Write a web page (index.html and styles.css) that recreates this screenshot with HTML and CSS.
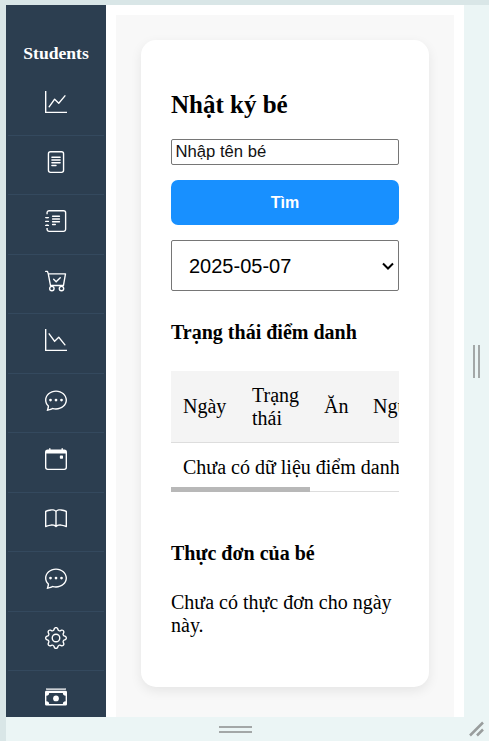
FILE: index.html
```html
<!DOCTYPE html>
<html lang="vi">
<head>
<meta charset="utf-8">
<title>Nhật ký bé</title>
<link rel="stylesheet" href="styles.css">
</head>
<body>
<svg class="sprite" aria-hidden="true">
<symbol id="chat" viewBox="0 0 16 16"><path d="M5 8a1 1 0 1 1-2 0 1 1 0 0 1 2 0m4 0a1 1 0 1 1-2 0 1 1 0 0 1 2 0m3 1a1 1 0 1 0 0-2 1 1 0 0 0 0 2"/><path d="m2.165 15.803.02-.004c1.83-.363 2.948-.842 3.468-1.105A9 9 0 0 0 8 15c4.418 0 8-3.134 8-7s-3.582-7-8-7-8 3.134-8 7c0 1.76.743 3.37 1.97 4.6a10.4 10.4 0 0 1-.524 2.318l-.003.011a11 11 0 0 1-.244.637c-.079.186.074.394.273.362a22 22 0 0 0 .693-.125m.8-3.108a1 1 0 0 0-.287-.801C1.618 10.83 1 9.468 1 8c0-3.192 3.004-6 7-6s7 2.808 7 6-3.004 6-7 6a8 8 0 0 1-2.088-.272 1 1 0 0 0-.711.074c-.387.196-1.24.57-2.634.893a11 11 0 0 0 .398-2"/></symbol>
</svg>
<div class="workspace">
  <div class="device">
    <nav class="sidebar">
      <div class="brand">Students</div>
      <a class="item"><svg viewBox="0 0 16 16"><path d="M0 0h1v15h15v1H0zm14.817 3.113a.5.5 0 0 1 .07.704l-4.5 5.5a.5.5 0 0 1-.74.037L7.06 6.767l-3.656 5.027a.5.5 0 0 1-.808-.588l4-5.5a.5.5 0 0 1 .758-.06l2.609 2.61 4.15-5.073a.5.5 0 0 1 .704-.07"/></svg></a>
      <a class="item"><svg viewBox="0 0 16 16"><g class="line"><rect x="2.5" y=".5" width="11" height="15" rx="1.5"/><path stroke-linecap="round" d="M5 4.5h6M5 6.5h6M5 8.5h6M5 10.5h3"/></g></svg></a>
      <a class="item"><svg viewBox="0 0 16 16"><g class="line"><path d="M1.5 3V2A1.5 1.5 0 0 1 3 .5h10.5A1.5 1.5 0 0 1 15 2v12a1.5 1.5 0 0 1-1.5 1.5H3A1.5 1.5 0 0 1 1.5 14v-1M1.5 5v1M1.5 8v.5M1.5 10.5v1"/><path stroke-linecap="round" d="M.5 5.5h2M.5 8.3h2M.5 11.2h2M5.5 4.5h5M5.5 6.5h5M5.5 8.5h5M5.5 10.5h2"/></g></svg></a>
      <a class="item"><svg viewBox="0 0 16 16"><g class="line"><path d="M.5 1h1.3l.6 1.8L4 11.300h9.400M2.400 2.800h12.500l-1.500 8.500" stroke-linejoin="round" stroke-linecap="round"/><path d="m6.300 6.800 1.800 1.800 3-3" stroke-linecap="round"/><circle cx="5" cy="13.500" r="1.600"/><circle cx="12" cy="13.500" r="1.600"/></g></svg></a>
      <a class="item"><svg viewBox="0 0 16 16"><path d="M0 0h1v15h15v1H0zm14.817 11.887a.5.5 0 0 0 .07-.704l-4.5-5.5a.5.5 0 0 0-.74-.037L7.06 8.233 3.404 3.206a.5.5 0 0 0-.808.588l4 5.5a.5.5 0 0 0 .758.06l2.609-2.61 4.15 5.073a.5.5 0 0 0 .704.07"/></svg></a>
      <a class="item"><svg><use href="#chat"/></svg></a>
      <a class="item"><svg viewBox="0 0 16 16"><path fill-rule="evenodd" d="M4 .5a.5.5 0 0 0-1 0V1H2a2 2 0 0 0-2 2v11a2 2 0 0 0 2 2h12a2 2 0 0 0 2-2V3a2 2 0 0 0-2-2h-1V.5a.5.5 0 0 0-1 0V1H4zM1 4h14v10a1 1 0 0 1-1 1H2a1 1 0 0 1-1-1zM11.300 5.500h1.300a.5.5 0 0 1 .5.5v1.300a.5.5 0 0 1-.5.5h-1.300a.5.5 0 0 1-.5-.5V6a.5.5 0 0 1 .5-.5"/></svg></a>
      <a class="item"><svg viewBox="0 0 16 16"><path d="M1 2.828c.885-.37 2.154-.769 3.388-.893 1.33-.134 2.458.063 3.112.752v9.746c-.935-.53-2.12-.603-3.213-.493-1.18.12-2.37.461-3.287.811zm7.5-.141c.654-.689 1.782-.886 3.112-.752 1.234.124 2.503.523 3.388.893v9.923c-.918-.35-2.107-.692-3.287-.81-1.094-.111-2.278-.039-3.213.492zM8 1.783C7.015.936 5.587.81 4.287.94c-1.514.153-3.042.672-3.994 1.105A.5.5 0 0 0 0 2.5v11a.5.5 0 0 0 .707.455c.882-.4 2.303-.881 3.68-1.02 1.409-.142 2.59.087 3.223.877a.5.5 0 0 0 .78 0c.633-.79 1.814-1.019 3.222-.877 1.378.139 2.8.62 3.681 1.02A.5.5 0 0 0 16 13.5v-11a.5.5 0 0 0-.293-.455c-.952-.433-2.48-.952-3.994-1.105C10.413.809 8.985.936 8 1.783"/></svg></a>
      <a class="item"><svg><use href="#chat"/></svg></a>
      <a class="item"><svg viewBox="0 0 16 16"><path d="M8 4.754a3.246 3.246 0 1 0 0 6.492 3.246 3.246 0 0 0 0-6.492M5.754 8a2.246 2.246 0 1 1 4.492 0 2.246 2.246 0 0 1-4.492 0"/><path d="M9.796 1.343c-.527-1.79-3.065-1.79-3.592 0l-.094.319a.873.873 0 0 1-1.255.52l-.292-.16c-1.64-.892-3.433.902-2.54 2.541l.159.292a.873.873 0 0 1-.52 1.255l-.319.094c-1.79.527-1.79 3.065 0 3.592l.319.094a.873.873 0 0 1 .52 1.255l-.16.292c-.892 1.64.901 3.434 2.541 2.54l.292-.159a.873.873 0 0 1 1.255.52l.094.319c.527 1.79 3.065 1.79 3.592 0l.094-.319a.873.873 0 0 1 1.255-.52l.292.16c1.64.893 3.434-.902 2.54-2.541l-.159-.292a.873.873 0 0 1 .52-1.255l.319-.094c1.79-.527 1.79-3.065 0-3.592l-.319-.094a.873.873 0 0 1-.52-1.255l.16-.292c.893-1.64-.902-3.433-2.541-2.54l-.292.159a.873.873 0 0 1-1.255-.52zm-2.633.283c.246-.835 1.428-.835 1.674 0l.094.319a1.873 1.873 0 0 0 2.693 1.115l.291-.16c.764-.415 1.6.42 1.184 1.185l-.159.292a1.873 1.873 0 0 0 1.116 2.692l.318.094c.835.246.835 1.428 0 1.674l-.319.094a1.873 1.873 0 0 0-1.115 2.693l.16.291c.415.764-.42 1.6-1.185 1.184l-.291-.159a1.873 1.873 0 0 0-2.693 1.116l-.094.318c-.246.835-1.428.835-1.674 0l-.094-.319a1.873 1.873 0 0 0-2.692-1.115l-.292.16c-.764.415-1.6-.42-1.184-1.185l.159-.291A1.873 1.873 0 0 0 1.945 8.93l-.319-.094c-.835-.246-.835-1.428 0-1.674l.319-.094A1.873 1.873 0 0 0 3.06 4.377l-.16-.292c-.415-.764.42-1.6 1.185-1.184l.292.159a1.873 1.873 0 0 0 2.692-1.115z"/></svg></a>
      <a class="item"><svg viewBox="0 0 16 16"><path fill-rule="evenodd" d="M1.5 1.800h13a.5.5 0 0 1 .5 1H1a.5.5 0 0 1 .5-1M1 3.500h14a1 1 0 0 1 1 1v8.700a1 1 0 0 1-1 1H1a1 1 0 0 1-1-1V4.500a1 1 0 0 1 1-1M3 5a2 2 0 0 1-2 2v4a2 2 0 0 1 2 2h10a2 2 0 0 1 2-2V7a2 2 0 0 1-2-2z"/><circle cx="8" cy="9" r="2.100"/></svg></a>
    </nav>
    <main class="page">
      <section class="card">
        <h2>Nhật ký bé</h2>
        <input class="search" type="text" placeholder="Nhập tên bé">
        <button class="find">Tìm</button>
        <div class="picker">
          <select class="date"><option>2025-05-07</option></select>
          <svg class="arrow" viewBox="0 0 12 8"><path d="m1 1.500 5 5 5-5"/></svg>
        </div>
        <h4>Trạng thái điểm danh</h4>
        <div class="scroller">
          <table>
            <colgroup><col class="c1"><col class="c2"><col class="c3"><col></colgroup>
            <tr><th>Ngày</th><th>Trạng thái</th><th>Ăn</th><th>Ngủ</th></tr>
            <tr><td colspan="4">Chưa có dữ liệu điểm danh</td></tr>
          </table>
          <div class="thumb"></div>
        </div>
        <h4 class="menu">Thực đơn của bé</h4>
        <p>Chưa có thực đơn cho ngày này.</p>
      </section>
    </main>
  </div>
  <div class="handle right"></div>
  <div class="handle bottom"></div>
  <svg class="corner" viewBox="0 0 16 16"><path d="M1 14.500 14 1.500M8 14.500l6-6"/></svg>
</div>
</body>
</html>
```
FILE: styles.css
```css
* { box-sizing: border-box; }
body {
  margin: 0;
  height: 741px;
  overflow: hidden;
  padding: 5px 0 0 6px;
  background: #d9e6e7;
  color: #000;
  font-family: "Liberation Serif", serif;
  font-size: 20px;
  line-height: 23px;
}
.sprite { position: absolute; width: 0; height: 0; }
.workspace {
  display: grid;
  grid-template: 712px 24px / 458px 25px;
  background: #ebf5f5;
}
.device { display: flex; overflow: hidden; background: #fff; }
.sidebar {
  flex: 0 0 100px;
  padding: 37px 2px 0;
  background: #2c3e50;
}
.brand {
  height: 34px;
  line-height: 23px;
  color: #fff;
  font-size: 17.6px;
  font-weight: bold;
  text-align: center;
}
.item {
  display: flex;
  justify-content: center;
  height: 59.5px;
  padding-top: 15px;
  border-bottom: 1px solid #34495e;
}
.item svg { width: 22px; height: 22px; fill: #fff; }
.item .line { fill: none; stroke: #fff; stroke-width: 1; }
.page {
  flex: 1;
  min-width: 0;
  margin: 10px 10px 0;
  padding: 25px;
  background: #f8f8f8;
}
.card {
  height: 647px;
  padding: 50px 30px 0;
  border-radius: 15px;
  background: #fff;
  box-shadow: 0 4px 12px rgba(0, 0, 0, .08);
}
h2 { margin: 0 0 19px; font-size: 25px; line-height: 30px; }
.search, .find, .date { display: block; width: 100%; font-family: "Liberation Sans", sans-serif; }
.search {
  height: 26px;
  margin: 0 0 15px;
  padding: 1px 3.5px;
  border: 1px solid #767676;
  border-radius: 2px;
  font-size: 16.67px;
}
.search::placeholder { color: #111; }
.find {
  height: 45px;
  margin: 0 0 15px;
  padding: 0;
  border: 0;
  border-radius: 7px;
  background: #1890ff;
  color: #fff;
  font-size: 16px;
  font-weight: bold;
}
.picker { position: relative; }
.date {
  appearance: none;
  height: 51px;
  padding: 0 0 0 17px;
  border: 1px solid #767676;
  border-radius: 2px;
  background: #fff;
  color: #000;
  font-size: 20px;
}
.arrow {
  position: absolute;
  top: 22px;
  right: 5px;
  width: 12px;
  height: 8px;
  fill: none;
  stroke: #000;
  stroke-width: 2;
  pointer-events: none;
}
h4 { margin: 30px 0 27px; font-size: 20px; line-height: 23px; }
.scroller { position: relative; height: 121px; overflow: hidden; }
table { width: 374px; border-spacing: 0; table-layout: fixed; }
.c1 { width: 69px; }
.c2 { width: 72px; }
.c3 { width: 49px; }
th, td {
  padding: 12px;
  border-bottom: 1px solid #ddd;
  font-weight: normal;
  text-align: left;
}
th { height: 72px; background: #f4f4f4; }
td { height: 49px; }
.thumb {
  position: absolute;
  left: 0;
  bottom: 0;
  width: 139px;
  height: 5px;
  background: #b8b8b8;
}
.menu { margin: 50px 0 26px; }
p { margin: 0; }
.handle { place-self: center; border: solid #a3a7a7; }
.right { width: 7px; height: 33px; border-width: 0 2px; }
.bottom { width: 33px; height: 7px; margin-top: 1px; border-width: 2px 0; }
.corner {
  place-self: center;
  width: 16px;
  height: 16px;
  stroke: #999d9d;
  stroke-width: 2.5;
}
```
